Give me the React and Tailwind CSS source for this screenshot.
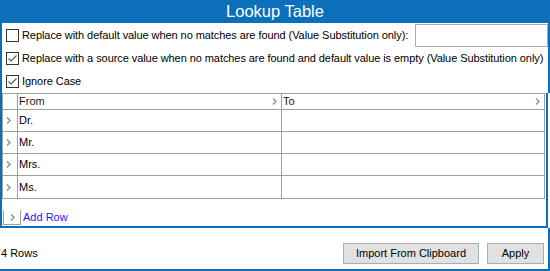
import React from 'react';

const rows = ['Dr.', 'Mr.', 'Mrs.', 'Ms.'];

const Chevron = () => (
  <svg width="5" height="7" viewBox="0 0 5 7" className="shrink-0">
    <path d="M1 0.5L4 3.5L1 6.5" fill="none" stroke="#8f8f8f" strokeWidth="1.4" />
  </svg>
);

const Checkbox = ({ checked }) => (
  <span className="w-[13px] h-[13px] border border-[#333333] bg-white flex items-center justify-center shrink-0">
    {checked && (
      <svg width="11" height="11" viewBox="0 0 11 11">
        <path d="M1.5 5.5L4 8L9.5 2.5" fill="none" stroke="#555555" strokeWidth="1.1" />
      </svg>
    )}
  </span>
);

const Option = ({ checked, label, children }) => (
  <div className="h-[23px] flex items-center pl-[4px]">
    <Checkbox checked={checked} />
    <span className="ml-[3px] whitespace-nowrap tracking-[-0.07px]">{label}</span>
    {children}
  </div>
);

const App = () => {
  return (
    <div className="w-[550px] h-[271px] bg-white flex flex-col font-['Liberation_Sans',Arial,sans-serif] text-[11px] text-black overflow-hidden">
      <div className="h-[23px] shrink-0 bg-[#0b6fbc] flex items-center justify-center text-white text-[16.5px] leading-none">
        Lookup Table
      </div>

      <div className="h-[70px] shrink-0 border-l-2 border-r-2 border-[#0b6fbc] pt-px flex flex-col">
        <Option label="Replace with default value when no matches are found (Value Substitution only):">
          <div className="ml-auto w-[133px] h-[23px] border border-[#acacac] bg-white" />
        </Option>
        <Option
          checked
          label="Replace with a source value when no matches are found and default value is empty (Value Substitution only)"
        />
        <Option checked label="Ignore Case" />
      </div>

      <div className="h-[135px] shrink-0 w-[548px] border-l-2 border-r-2 border-b-2 border-[#0b6fbc] flex flex-col">
        <div className="w-[543px] border border-[#a0a0a0] flex flex-col">
          <div className="h-[16px] flex border-b border-[#a0a0a0]">
            <div className="w-[15px] border-r border-[#a0a0a0]" />
            <div className="w-[264px] border-r border-[#a0a0a0] flex items-center pl-px pr-[4px] text-[#1a1a1a]">
              <span className="flex-1">From</span>
              <Chevron />
            </div>
            <div className="flex-1 flex items-center pl-px pr-[4px] text-[#1a1a1a]">
              <span className="flex-1">To</span>
              <Chevron />
            </div>
          </div>
          {rows.map((r, i) => (
            <div key={r} className={`h-[22px] flex ${i < rows.length - 1 ? 'border-b border-[#a0a0a0]' : ''}`}>
              <div className="w-[15px] border-r border-[#a0a0a0] flex items-center pl-[3px]">
                <Chevron />
              </div>
              <div className="w-[264px] border-r border-[#a0a0a0] flex items-center pl-px">{r}</div>
              <div className="flex-1" />
            </div>
          ))}
        </div>

        <div className="mt-[11px] h-[15px] flex items-center">
          <div className="ml-px w-[18px] h-[15px] border-l border-r border-b border-[#a0a0a0] flex items-center justify-center">
            <Chevron />
          </div>
          <span className="ml-[2px] text-[#1a1aff]">Add Row</span>
        </div>
      </div>

      <div className="h-[43px] shrink-0 border-r-2 border-b-2 border-[#0b6fbc] flex items-center pt-[10px] pl-px pr-[4px]">
        <span>4 Rows</span>
        <button className="ml-auto w-[136px] h-[21px] bg-[#e1e1e1] border border-[#adadad]">
          Import From Clipboard
        </button>
        <button className="ml-[8px] w-[57px] h-[21px] bg-[#e1e1e1] border border-[#adadad]">
          Apply
        </button>
      </div>
    </div>
  );
};

export default App;
